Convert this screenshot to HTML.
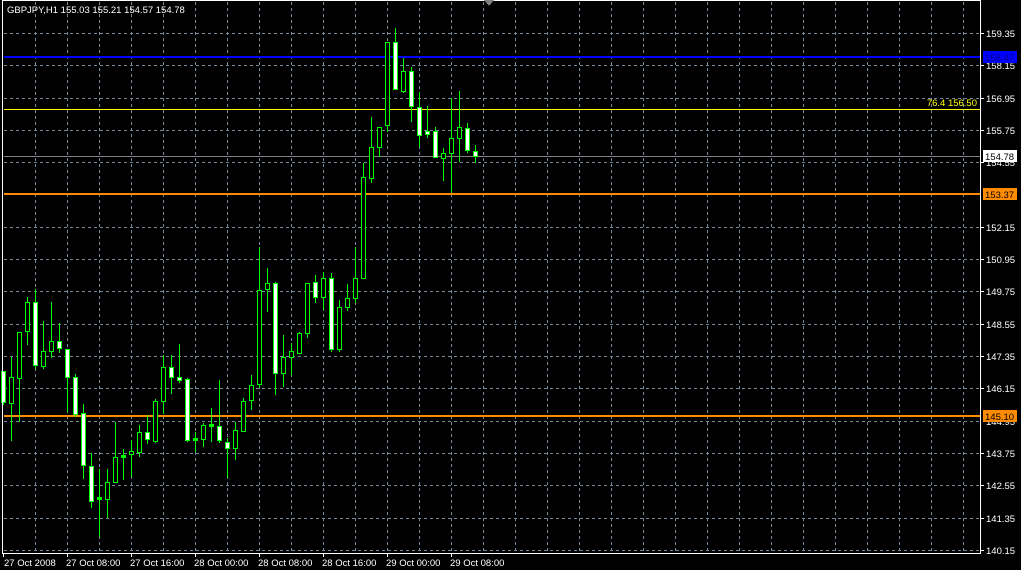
<!DOCTYPE html>
<html><head><meta charset="utf-8"><style>
html,body{margin:0;padding:0;background:#000;width:1021px;height:570px;overflow:hidden}
svg{display:block}
text{font-family:"Liberation Sans",sans-serif;font-size:9.5px;fill:#fff}
</style></head><body>
<svg width="1021" height="570" viewBox="0 0 1021 570" shape-rendering="crispEdges">
<rect width="1021" height="570" fill="#000"/>
<g stroke="#778899" stroke-width="1" stroke-dasharray="3,3">
<line x1="35.5" y1="2" x2="35.5" y2="552"/><line x1="67.5" y1="2" x2="67.5" y2="552"/><line x1="99.5" y1="2" x2="99.5" y2="552"/><line x1="131.5" y1="2" x2="131.5" y2="552"/><line x1="163.5" y1="2" x2="163.5" y2="552"/><line x1="195.5" y1="2" x2="195.5" y2="552"/><line x1="227.5" y1="2" x2="227.5" y2="552"/><line x1="259.5" y1="2" x2="259.5" y2="552"/><line x1="291.5" y1="2" x2="291.5" y2="552"/><line x1="323.5" y1="2" x2="323.5" y2="552"/><line x1="355.5" y1="2" x2="355.5" y2="552"/><line x1="387.5" y1="2" x2="387.5" y2="552"/><line x1="419.5" y1="2" x2="419.5" y2="552"/><line x1="451.5" y1="2" x2="451.5" y2="552"/><line x1="483.5" y1="2" x2="483.5" y2="552"/><line x1="515.5" y1="2" x2="515.5" y2="552"/><line x1="547.5" y1="2" x2="547.5" y2="552"/><line x1="579.5" y1="2" x2="579.5" y2="552"/><line x1="611.5" y1="2" x2="611.5" y2="552"/><line x1="643.5" y1="2" x2="643.5" y2="552"/><line x1="675.5" y1="2" x2="675.5" y2="552"/><line x1="707.5" y1="2" x2="707.5" y2="552"/><line x1="739.5" y1="2" x2="739.5" y2="552"/><line x1="771.5" y1="2" x2="771.5" y2="552"/><line x1="803.5" y1="2" x2="803.5" y2="552"/><line x1="835.5" y1="2" x2="835.5" y2="552"/><line x1="867.5" y1="2" x2="867.5" y2="552"/><line x1="899.5" y1="2" x2="899.5" y2="552"/><line x1="931.5" y1="2" x2="931.5" y2="552"/><line x1="963.5" y1="2" x2="963.5" y2="552"/>
<line x1="4" y1="33.5" x2="980" y2="33.5"/><line x1="4" y1="65.5" x2="980" y2="65.5"/><line x1="4" y1="98.5" x2="980" y2="98.5"/><line x1="4" y1="130.5" x2="980" y2="130.5"/><line x1="4" y1="162.5" x2="980" y2="162.5"/><line x1="4" y1="194.5" x2="980" y2="194.5"/><line x1="4" y1="227.5" x2="980" y2="227.5"/><line x1="4" y1="259.5" x2="980" y2="259.5"/><line x1="4" y1="291.5" x2="980" y2="291.5"/><line x1="4" y1="324.5" x2="980" y2="324.5"/><line x1="4" y1="356.5" x2="980" y2="356.5"/><line x1="4" y1="388.5" x2="980" y2="388.5"/><line x1="4" y1="421.5" x2="980" y2="421.5"/><line x1="4" y1="453.5" x2="980" y2="453.5"/><line x1="4" y1="485.5" x2="980" y2="485.5"/><line x1="4" y1="518.5" x2="980" y2="518.5"/><line x1="4" y1="550.5" x2="980" y2="550.5"/>
</g>
<rect x="4" y="56" width="976" height="2" fill="#0000ff"/>
<rect x="4" y="109" width="976" height="1" fill="#ffff00"/>
<rect x="4" y="156" width="976" height="1" fill="#808080"/>
<rect x="4" y="193" width="976" height="2" fill="#ff8c00"/>
<rect x="4" y="415" width="976" height="2" fill="#ff8c00"/>
<text x="977" y="106" text-anchor="end" style="fill:#ffff00">76.4 156.50</text>
<g fill="#00ff00">
<rect x="3" y="371" width="1" height="34"/><rect x="1" y="371" width="5" height="32"/>
<rect x="11" y="357" width="1" height="84"/><rect x="9" y="377" width="5" height="27"/>
<rect x="19" y="332" width="1" height="90"/><rect x="17" y="332" width="5" height="47"/>
<rect x="27" y="297" width="1" height="48"/><rect x="25" y="302" width="5" height="30"/>
<rect x="35" y="289" width="1" height="80"/><rect x="33" y="302" width="5" height="64"/>
<rect x="43" y="321" width="1" height="48"/><rect x="41" y="351" width="5" height="16"/>
<rect x="51" y="302" width="1" height="56"/><rect x="49" y="341" width="5" height="11"/>
<rect x="59" y="323" width="1" height="30"/><rect x="57" y="341" width="5" height="8"/>
<rect x="67" y="349" width="1" height="63"/><rect x="65" y="349" width="5" height="29"/>
<rect x="75" y="374" width="1" height="43"/><rect x="73" y="377" width="5" height="38"/>
<rect x="83" y="404" width="1" height="75"/><rect x="81" y="413" width="5" height="53"/>
<rect x="91" y="453" width="1" height="55"/><rect x="89" y="466" width="5" height="36"/>
<rect x="99" y="469" width="1" height="68"/><rect x="97" y="497" width="5" height="3"/>
<rect x="107" y="469" width="1" height="49"/><rect x="105" y="482" width="5" height="18"/>
<rect x="115" y="422" width="1" height="60"/><rect x="113" y="457" width="5" height="26"/>
<rect x="123" y="449" width="1" height="31"/><rect x="121" y="455" width="5" height="3"/>
<rect x="131" y="440" width="1" height="37"/><rect x="129" y="451" width="5" height="4"/>
<rect x="139" y="425" width="1" height="32"/><rect x="137" y="432" width="5" height="21"/>
<rect x="147" y="415" width="1" height="29"/><rect x="145" y="432" width="5" height="8"/>
<rect x="155" y="399" width="1" height="44"/><rect x="153" y="401" width="5" height="41"/>
<rect x="163" y="355" width="1" height="59"/><rect x="161" y="367" width="5" height="35"/>
<rect x="171" y="355" width="1" height="39"/><rect x="169" y="367" width="5" height="11"/>
<rect x="179" y="344" width="1" height="39"/><rect x="177" y="377" width="5" height="4"/>
<rect x="187" y="378" width="1" height="64"/><rect x="185" y="379" width="5" height="62"/>
<rect x="195" y="432" width="1" height="20"/><rect x="193" y="438" width="5" height="3"/>
<rect x="203" y="423" width="1" height="24"/><rect x="201" y="425" width="5" height="15"/>
<rect x="211" y="408" width="1" height="34"/><rect x="209" y="424" width="5" height="3"/>
<rect x="219" y="380" width="1" height="63"/><rect x="217" y="426" width="5" height="15"/>
<rect x="227" y="438" width="1" height="40"/><rect x="225" y="442" width="5" height="7"/>
<rect x="235" y="422" width="1" height="38"/><rect x="233" y="430" width="5" height="19"/>
<rect x="243" y="398" width="1" height="34"/><rect x="241" y="401" width="5" height="31"/>
<rect x="251" y="375" width="1" height="35"/><rect x="249" y="385" width="5" height="16"/>
<rect x="259" y="247" width="1" height="141"/><rect x="257" y="290" width="5" height="95"/>
<rect x="267" y="268" width="1" height="44"/><rect x="265" y="283" width="5" height="7"/>
<rect x="275" y="282" width="1" height="113"/><rect x="273" y="283" width="5" height="91"/>
<rect x="283" y="335" width="1" height="52"/><rect x="281" y="357" width="5" height="17"/>
<rect x="291" y="343" width="1" height="32"/><rect x="289" y="351" width="5" height="7"/>
<rect x="299" y="332" width="1" height="22"/><rect x="297" y="333" width="5" height="21"/>
<rect x="307" y="283" width="1" height="55"/><rect x="305" y="283" width="5" height="51"/>
<rect x="315" y="275" width="1" height="28"/><rect x="313" y="282" width="5" height="16"/>
<rect x="323" y="272" width="1" height="38"/><rect x="321" y="278" width="5" height="20"/>
<rect x="331" y="273" width="1" height="79"/><rect x="329" y="278" width="5" height="72"/>
<rect x="339" y="300" width="1" height="52"/><rect x="337" y="307" width="5" height="43"/>
<rect x="347" y="284" width="1" height="27"/><rect x="345" y="298" width="5" height="10"/>
<rect x="355" y="247" width="1" height="56"/><rect x="353" y="278" width="5" height="21"/>
<rect x="363" y="163" width="1" height="116"/><rect x="361" y="177" width="5" height="102"/>
<rect x="371" y="117" width="1" height="66"/><rect x="369" y="147" width="5" height="32"/>
<rect x="379" y="127" width="1" height="30"/><rect x="377" y="127" width="5" height="21"/>
<rect x="387" y="42" width="1" height="90"/><rect x="385" y="42" width="5" height="84"/>
<rect x="395" y="28" width="1" height="61"/><rect x="393" y="42" width="5" height="48"/>
<rect x="403" y="58" width="1" height="35"/><rect x="401" y="71" width="5" height="21"/>
<rect x="411" y="67" width="1" height="55"/><rect x="409" y="71" width="5" height="36"/>
<rect x="419" y="92" width="1" height="55"/><rect x="417" y="107" width="5" height="29"/>
<rect x="427" y="106" width="1" height="32"/><rect x="425" y="131" width="5" height="4"/>
<rect x="435" y="127" width="1" height="31"/><rect x="433" y="131" width="5" height="27"/>
<rect x="443" y="148" width="1" height="33"/><rect x="441" y="153" width="5" height="6"/>
<rect x="451" y="98" width="1" height="95"/><rect x="449" y="138" width="5" height="16"/>
<rect x="459" y="91" width="1" height="71"/><rect x="457" y="127" width="5" height="12"/>
<rect x="467" y="123" width="1" height="30"/><rect x="465" y="128" width="5" height="23"/>
<rect x="475" y="145" width="1" height="18"/><rect x="473" y="151" width="5" height="6"/>
</g>
<g fill="#fff">
<rect x="2" y="372" width="3" height="30"/><rect x="34" y="303" width="3" height="62"/><rect x="58" y="342" width="3" height="6"/><rect x="66" y="350" width="3" height="27"/><rect x="74" y="378" width="3" height="36"/><rect x="82" y="414" width="3" height="51"/><rect x="90" y="467" width="3" height="34"/><rect x="146" y="433" width="3" height="6"/><rect x="170" y="368" width="3" height="9"/><rect x="178" y="378" width="3" height="2"/><rect x="186" y="380" width="3" height="60"/><rect x="218" y="427" width="3" height="13"/><rect x="226" y="443" width="3" height="5"/><rect x="274" y="284" width="3" height="89"/><rect x="314" y="283" width="3" height="14"/><rect x="330" y="279" width="3" height="70"/><rect x="394" y="43" width="3" height="46"/><rect x="410" y="72" width="3" height="34"/><rect x="418" y="108" width="3" height="27"/><rect x="426" y="132" width="3" height="2"/><rect x="434" y="132" width="3" height="25"/><rect x="466" y="129" width="3" height="21"/><rect x="474" y="152" width="3" height="4"/>
</g>
<g fill="#000">
<rect x="10" y="378" width="3" height="25"/><rect x="18" y="333" width="3" height="45"/><rect x="26" y="303" width="3" height="28"/><rect x="42" y="352" width="3" height="14"/><rect x="50" y="342" width="3" height="9"/><rect x="106" y="483" width="3" height="16"/><rect x="114" y="458" width="3" height="24"/><rect x="130" y="452" width="3" height="2"/><rect x="138" y="433" width="3" height="19"/><rect x="154" y="402" width="3" height="39"/><rect x="162" y="368" width="3" height="33"/><rect x="202" y="426" width="3" height="13"/><rect x="234" y="431" width="3" height="17"/><rect x="242" y="402" width="3" height="29"/><rect x="250" y="386" width="3" height="14"/><rect x="258" y="291" width="3" height="93"/><rect x="266" y="284" width="3" height="5"/><rect x="282" y="358" width="3" height="15"/><rect x="290" y="352" width="3" height="5"/><rect x="298" y="334" width="3" height="19"/><rect x="306" y="284" width="3" height="49"/><rect x="322" y="279" width="3" height="18"/><rect x="338" y="308" width="3" height="41"/><rect x="346" y="299" width="3" height="8"/><rect x="354" y="279" width="3" height="19"/><rect x="362" y="178" width="3" height="100"/><rect x="370" y="148" width="3" height="30"/><rect x="378" y="128" width="3" height="19"/><rect x="386" y="43" width="3" height="82"/><rect x="402" y="72" width="3" height="19"/><rect x="442" y="154" width="3" height="4"/><rect x="450" y="139" width="3" height="14"/><rect x="458" y="128" width="3" height="10"/>
</g>
<g fill="#fff">
<rect x="2" y="0" width="1" height="554"/>
<rect x="2" y="0" width="979" height="1"/>
<rect x="980" y="0" width="1" height="554"/>
<rect x="2" y="553" width="979" height="1"/>
<rect x="3" y="553" width="1" height="4"/><rect x="67" y="553" width="1" height="4"/><rect x="131" y="553" width="1" height="4"/><rect x="195" y="553" width="1" height="4"/><rect x="259" y="553" width="1" height="4"/><rect x="323" y="553" width="1" height="4"/><rect x="387" y="553" width="1" height="4"/><rect x="451" y="553" width="1" height="4"/>
<rect x="980" y="33" width="4" height="1"/><rect x="980" y="65" width="4" height="1"/><rect x="980" y="98" width="4" height="1"/><rect x="980" y="130" width="4" height="1"/><rect x="980" y="162" width="4" height="1"/><rect x="980" y="227" width="4" height="1"/><rect x="980" y="259" width="4" height="1"/><rect x="980" y="291" width="4" height="1"/><rect x="980" y="324" width="4" height="1"/><rect x="980" y="356" width="4" height="1"/><rect x="980" y="388" width="4" height="1"/><rect x="980" y="453" width="4" height="1"/><rect x="980" y="485" width="4" height="1"/><rect x="980" y="518" width="4" height="1"/><rect x="980" y="550" width="4" height="1"/>
</g>
<polygon points="484,0 494,0 489,6" fill="#808080"/>
<text x="7" y="13">GBPJPY,H1  155.03 155.21 154.57 154.78</text>
<g>
<text x="986" y="37">159.35</text><text x="986" y="69">158.15</text><text x="986" y="102">156.95</text><text x="986" y="134">155.75</text><text x="986" y="166">154.55</text><text x="986" y="231">152.15</text><text x="986" y="263">150.95</text><text x="986" y="295">149.75</text><text x="986" y="328">148.55</text><text x="986" y="360">147.35</text><text x="986" y="392">146.15</text><text x="986" y="425">144.95</text><text x="986" y="457">143.75</text><text x="986" y="489">142.55</text><text x="986" y="522">141.35</text><text x="986" y="554">140.15</text>
</g>
<rect x="983" y="51" width="34" height="12" fill="#0000ff"/><text x="985" y="61" style="fill:#000080">158.47</text>
<rect x="983" y="150" width="34" height="12" fill="#fff"/><text x="985" y="160" style="fill:#000">154.78</text>
<rect x="983" y="188" width="34" height="12" fill="#ff8c00"/><text x="985" y="198" style="fill:#000">153.37</text>
<rect x="983" y="410" width="34" height="12" fill="#ff8c00"/><text x="985" y="420" style="fill:#000">145.10</text>
<g>
<text x="4" y="566">27 Oct 2008</text><text x="66" y="566">27 Oct 08:00</text><text x="130" y="566">27 Oct 16:00</text><text x="194" y="566">28 Oct 00:00</text><text x="258" y="566">28 Oct 08:00</text><text x="322" y="566">28 Oct 16:00</text><text x="386" y="566">29 Oct 00:00</text><text x="450" y="566">29 Oct 08:00</text>
</g>
</svg>
</body></html>
